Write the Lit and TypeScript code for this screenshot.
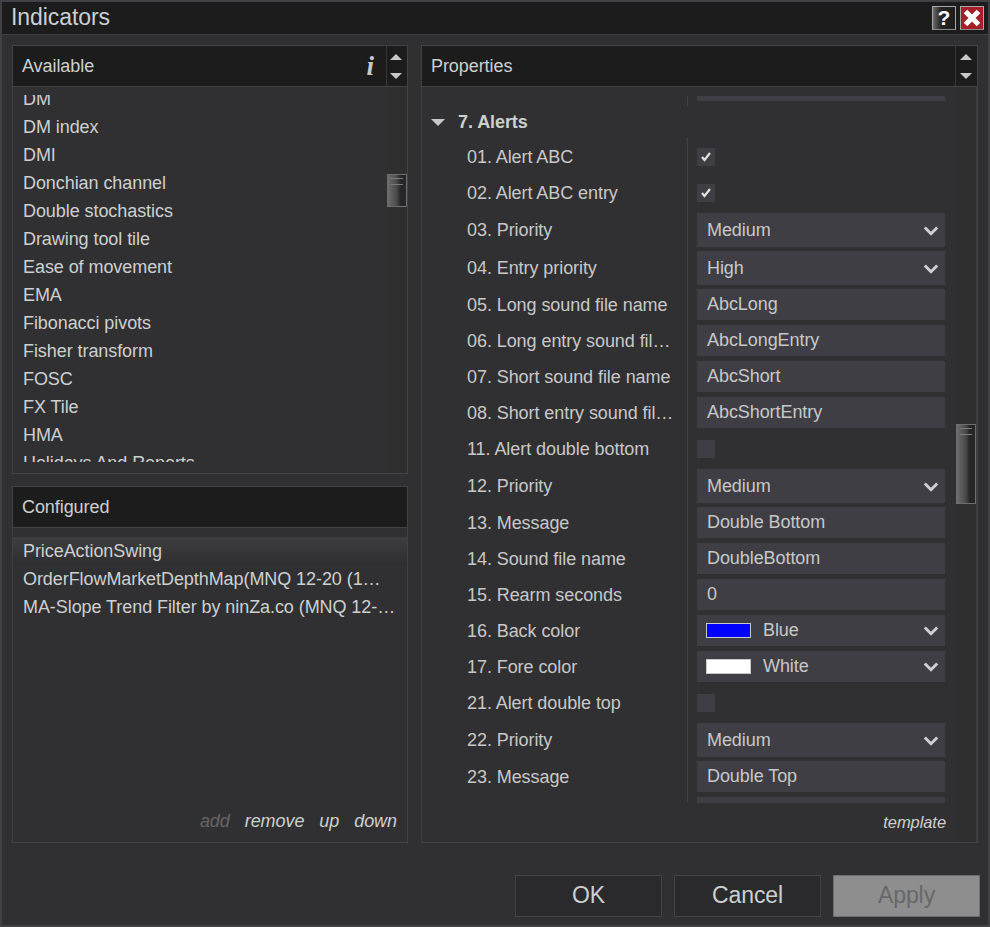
import { LitElement, html, css, nothing } from 'lit';
import { customElement } from 'lit/decorators.js';

type Row = { label: string; kind: 'check' | 'select' | 'input' | 'color'; value?: string; on?: boolean; color?: string };

const AVAILABLE = [
  'DM', 'DM index', 'DMI', 'Donchian channel', 'Double stochastics', 'Drawing tool tile', 'Ease of movement',
  'EMA', 'Fibonacci pivots', 'Fisher transform', 'FOSC', 'FX Tile', 'HMA', 'Holidays And Reports',
];

const CONFIGURED = [
  'PriceActionSwing',
  'OrderFlowMarketDepthMap(MNQ 12-20 (1…',
  'MA-Slope Trend Filter by ninZa.co (MNQ 12-…',
];

const ROWS: Row[] = [
  { label: '01. Alert ABC', kind: 'check', on: true },
  { label: '02. Alert ABC entry', kind: 'check', on: true },
  { label: '03. Priority', kind: 'select', value: 'Medium' },
  { label: '04. Entry priority', kind: 'select', value: 'High' },
  { label: '05. Long sound file name', kind: 'input', value: 'AbcLong' },
  { label: '06. Long entry sound fil…', kind: 'input', value: 'AbcLongEntry' },
  { label: '07. Short sound file name', kind: 'input', value: 'AbcShort' },
  { label: '08. Short entry sound fil…', kind: 'input', value: 'AbcShortEntry' },
  { label: '11. Alert double bottom', kind: 'check' },
  { label: '12. Priority', kind: 'select', value: 'Medium' },
  { label: '13. Message', kind: 'input', value: 'Double Bottom' },
  { label: '14. Sound file name', kind: 'input', value: 'DoubleBottom' },
  { label: '15. Rearm seconds', kind: 'input', value: '0' },
  { label: '16. Back color', kind: 'color', value: 'Blue', color: '#0000ff' },
  { label: '17. Fore color', kind: 'color', value: 'White', color: '#ffffff' },
  { label: '21. Alert double top', kind: 'check' },
  { label: '22. Priority', kind: 'select', value: 'Medium' },
  { label: '23. Message', kind: 'input', value: 'Double Top' },
  { label: '', kind: 'input', value: '' },
];

const chevron = html`<svg class="chev" width="16" height="11" viewBox="0 0 16 11"><path d="M1.8 2.5 L8 8.7 L14.2 2.5" fill="none" stroke="#cfcfcf" stroke-width="3"/></svg>`;
const tick = html`<svg width="10" height="10" viewBox="0 0 10 10"><path d="M1 5 L3.5 8 L9 1" fill="none" stroke="#e2e2e2" stroke-width="2.2"/></svg>`;

@customElement('app-root')
export class AppRoot extends LitElement {
  static styles = css`
    :host {
      display: flex;
      flex-direction: column;
      width: 990px;
      height: 927px;
      box-sizing: border-box;
      border: 2px solid #414145;
      background: #303032;
      color: #cdd0d0;
      font-family: "Liberation Sans", Arial, sans-serif;
      font-size: 18px;
      letter-spacing: -0.07px;
      overflow: hidden;
    }
    .titlebar {
      height: 32px;
      flex: none;
      display: flex;
      align-items: center;
      background: #1c1c1d;
      border-bottom: 1px solid #414144;
      padding: 0 4px 0 9px;
      font-size: 23px;
      gap: 4px;
    }
    .titlebar .name { flex: 1; padding-bottom: 2px; }
    .winbtn {
      width: 24px;
      height: 24px;
      box-sizing: border-box;
      border: 1px solid #a8a8a8;
      border-bottom-color: #8a8a8a;
      display: flex;
      align-items: center;
      justify-content: center;
      background: linear-gradient(90deg, #6a6a6a 0, #262626 35%, #1c1c1c 100%);
      color: #fff;
      font-weight: bold;
      font-size: 21px;
    }
    .winbtn.close { background: #a61f28; }
    .content {
      flex: none;
      height: 798px;
      margin-top: 10px;
      padding: 0 10px;
      display: grid;
      grid-template-columns: 396px 557px;
      column-gap: 13px;
    }
    .leftcol {
      display: grid;
      grid-template-rows: 429px 357px;
      row-gap: 12px;
    }
    .panel {
      border: 1px solid #424245;
      display: flex;
      flex-direction: column;
      min-height: 0;
      min-width: 0;
    }
    .head {
      height: 40px;
      flex: none;
      background: #1c1c1d;
      border-bottom: 1px solid #424245;
      display: flex;
      align-items: center;
      padding-left: 9px;
    }
    .head .title { flex: 1; }
    .info {
      font-family: "Liberation Serif", serif;
      font-style: italic;
      font-weight: bold;
      font-size: 27px;
      color: #c8c8c8;
      margin-right: 12px;
    }
    .arrows {
      width: 21px;
      height: 100%;
      flex: none;
      box-sizing: border-box;
      border-left: 1px solid #38383a;
      padding-right: 2px;
      display: flex;
      flex-direction: column;
      align-items: center;
      justify-content: center;
      gap: 13px;
    }
    .arrows.wide { width: 22px; padding-right: 2px; }
    .body {
      flex: 1;
      display: flex;
      min-height: 0;
    }
    .track {
      position: relative;
      width: 20px;
      flex: none;
      background: #2f2f2f;
    }
    .track.wide { width: 22px; border-right: 1px solid #3c3c40; box-sizing: border-box; }
    .thumb {
      position: absolute;
      left: 0;
      width: 20px;
      box-sizing: border-box;
      border: 1px solid #6e6e6e;
      background: linear-gradient(90deg, #6c6c6c 0, #484848 50%, #262628 70%, #262628 100%);
    }
    .track.wide .thumb { left: 1px; }
    .thumb::before {
      content: '';
      position: absolute;
      top: 3px;
      left: 3px;
      width: 12px;
      height: 5px;
      border-top: 1px solid #7c7c7c;
      border-bottom: 1px solid #7c7c7c;
    }
    .list {
      flex: 1;
      min-width: 0;
      margin: 8px 0 11px;
      overflow: hidden;
    }
    .list .inner { margin-top: -10px; }
    .item {
      height: 28px;
      line-height: 28px;
      padding-left: 10px;
      white-space: nowrap;
    }
    .conf {
      flex: 1;
      min-height: 0;
      display: flex;
      flex-direction: column;
      padding-top: 9px;
    }
    .conf .items { flex: 1; }
    .conf .item.sel {
      background: linear-gradient(180deg, #3e3e40 0, #2e2e2f 100%);
    }
    .links {
      display: flex;
      justify-content: flex-end;
      gap: 15px;
      font-style: italic;
      box-sizing: border-box;
      height: 36px;
      padding: 3px 10px 0 0;
      line-height: 24px;
    }
    .links .off { color: #666668; }
    .props {
      flex: 1;
      min-width: 0;
      display: flex;
      flex-direction: column;
    }
    .scroll {
      height: 707px;
      margin-top: 9px;
      overflow: hidden;
      flex: none;
    }
    .stub {
      height: 10px;
      display: flex;
    }
    .stub .spacer {
      width: 265px;
      flex: none;
      border-right: 1px solid #424245;
    }
    .stub .bar {
      width: 248px;
      height: 5px;
      margin-left: 9px;
      background: #3e3e44;
    }
    .group {
      height: 31px;
      box-sizing: border-box;
      padding: 2px 0 0 9px;
      display: flex;
      align-items: center;
      font-weight: bold;
      gap: 13px;
    }
    .rows { padding-top: 2px; position: relative; }
    .rows::before {
      content: '';
      position: absolute;
      top: 0;
      bottom: 0;
      left: 265px;
      width: 1px;
      background: #424245;
    }
    .row {
      display: flex;
      align-items: center;
      height: 36px;
    }
    .row.tall { height: 38px; }
    .label {
      width: 210px;
      margin-left: 45px;
      margin-right: 20px;
      flex: none;
      white-space: nowrap;
      color: #c8c8c8;
    }
    .field {
      width: 248px;
      box-sizing: border-box;
      height: 31px;
      margin-bottom: 1px;
      background: #3e3e44;
      color: #c8c8c8;
      display: flex;
      align-items: center;
      padding: 0 6px 0 10px;
    }
    .field.select { height: 34px; margin-bottom: 0; }
    .field .v { flex: 1; }
    .swatch {
      width: 45px;
      height: 15px;
      box-sizing: border-box;
      border: 1px solid #c8c8c8;
      margin: 0 12px 0 -1px;
    }
    .check {
      width: 18px;
      height: 18px;
      background: #3e3e44;
      display: flex;
      align-items: center;
      justify-content: center;
    }
    .tmpl {
      flex: 1;
      text-align: right;
      font-style: italic;
      font-size: 16.5px;
      line-height: 38px;
      padding-right: 9px;
    }
    .footer {
      flex: none;
      margin-top: 32px;
      padding-right: 8px;
      display: flex;
      justify-content: flex-end;
      gap: 12px;
    }
    .btn {
      width: 147px;
      height: 42px;
      box-sizing: border-box;
      border: 1px solid #424245;
      padding-bottom: 2px;
      background: #2a2a2c;
      font-size: 23px;
      display: flex;
      align-items: center;
      justify-content: center;
    }
    .btn.off {
      background: #8e8e8e;
      border-color: #6e6e6e;
      color: #68686a;
    }
  `;

  arrows(wide = false) {
    return html`<div class="arrows ${wide ? 'wide' : ''}">
      <svg width="12" height="6" viewBox="0 0 12 6"><path d="M6 0 L12 6 L0 6 Z" fill="#c8c8c8"/></svg>
      <svg width="12" height="6" viewBox="0 0 12 6"><path d="M0 0 L12 0 L6 6 Z" fill="#c8c8c8"/></svg>
    </div>`;
  }

  field(r: Row) {
    if (r.kind === 'check') {
      return html`<div class="check">${r.on ? tick : nothing}</div>`;
    }
    if (r.kind === 'input') {
      return html`<div class="field"><span class="v">${r.value}</span></div>`;
    }
    if (r.kind === 'color') {
      return html`<div class="field">
        <span class="swatch" style="background:${r.color}"></span>
        <span class="v">${r.value}</span>${chevron}
      </div>`;
    }
    return html`<div class="field select"><span class="v">${r.value}</span>${chevron}</div>`;
  }

  render() {
    return html`
      <div class="titlebar">
        <span class="name">Indicators</span>
        <div class="winbtn">?</div>
        <div class="winbtn close">
          <svg width="20" height="20" viewBox="0 0 20 20"><path d="M3.5 3.5 L16.5 16.5 M16.5 3.5 L3.5 16.5" stroke="#fff" stroke-width="5"/></svg>
        </div>
      </div>
      <div class="content">
        <div class="leftcol">
          <div class="panel">
            <div class="head">
              <span class="title">Available</span>
              <span class="info">i</span>
              ${this.arrows()}
            </div>
            <div class="body">
              <div class="list">
                <div class="inner">${AVAILABLE.map((a) => html`<div class="item">${a}</div>`)}</div>
              </div>
              <div class="track"><div class="thumb" style="top:87px;height:33px"></div></div>
            </div>
          </div>
          <div class="panel">
            <div class="head"><span class="title">Configured</span></div>
            <div class="conf">
              <div class="items">
                ${CONFIGURED.map((c, i) => html`<div class="item ${i === 0 ? 'sel' : ''}">${c}</div>`)}
              </div>
              <div class="links">
                <span class="off">add</span><span>remove</span><span>up</span><span>down</span>
              </div>
            </div>
          </div>
        </div>
        <div class="panel">
          <div class="head">
            <span class="title">Properties</span>
            ${this.arrows(true)}
          </div>
          <div class="body">
            <div class="props">
              <div class="scroll">
                <div class="stub"><div class="spacer"></div><div class="bar"></div></div>
                <div class="group">
                  <svg width="14" height="7" viewBox="0 0 14 7"><path d="M0 0 L14 0 L7 7 Z" fill="#c8c8c8"/></svg>
                  <span>7. Alerts</span>
                </div>
                <div class="rows">
                  ${ROWS.map((r) => html`<div class="row ${r.kind === 'select' ? 'tall' : ''}">
                    <div class="label">${r.label}</div>
                    ${this.field(r)}
                  </div>`)}
                </div>
              </div>
              <div class="tmpl">template</div>
            </div>
            <div class="track wide"><div class="thumb" style="top:337px;height:80px"></div></div>
          </div>
        </div>
      </div>
      <div class="footer">
        <div class="btn">OK</div>
        <div class="btn">Cancel</div>
        <div class="btn off">Apply</div>
      </div>
    `;
  }
}
